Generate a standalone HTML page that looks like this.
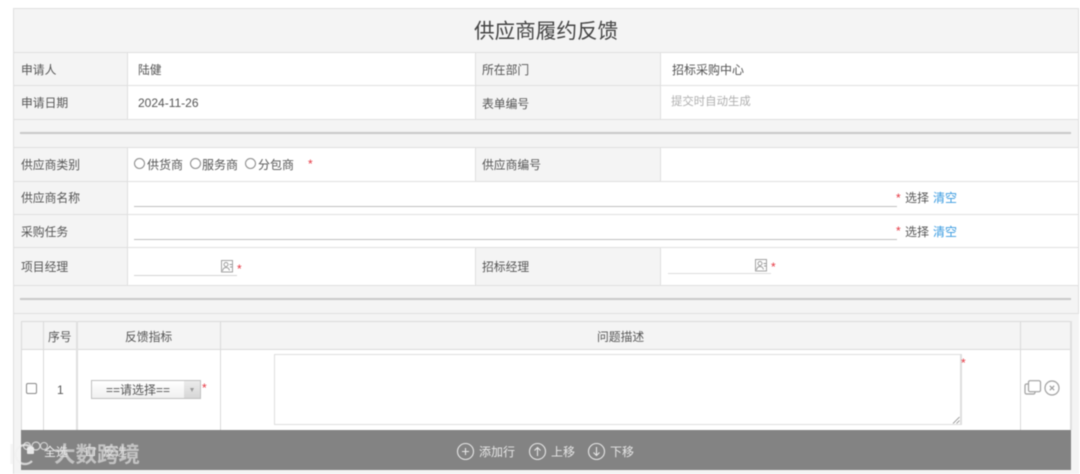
<!DOCTYPE html>
<html lang="zh"><head><meta charset="utf-8"><style>
html,body{margin:0;padding:0;width:1080px;height:474px;overflow:hidden;background:#fff}
body{font-family:"Liberation Sans","Noto Sans CJK SC",sans-serif;color:#555;font-size:12px;position:relative}
#p{position:absolute;left:0;top:0;width:1080px;height:474px;filter:blur(.4px)}
.b,.t{position:absolute}
.t{white-space:nowrap;line-height:16px}
.h{background:#e0e0e0;height:1px}
.v{background:#e0e0e0;width:1px}
.g{background:#f4f4f4}
.r{color:#e5343f}
.o{position:absolute;width:9px;height:9px;border:1px solid #888;border-radius:50%;background:#fff}
</style></head><body><div id="p">
<div class="b g" style="left:13px;top:8px;width:1066px;height:466px"></div>
<div class="b" style="left:13px;top:8px;width:1px;height:466px;background:#e0e0e0"></div>
<div class="b" style="left:13px;top:8px;width:1066px;height:1px;background:#e0e0e0"></div>
<div class="b" style="left:1078px;top:8px;width:1px;height:306px;background:#e0e0e0"></div>
<div class="b" style="left:1079px;top:0;width:1px;height:474px;background:#fff"></div>

<!-- white cells -->
<div class="b" style="left:127px;top:53px;width:348px;height:66px;background:#fff"></div>
<div class="b" style="left:661px;top:53px;width:417px;height:66px;background:#fff"></div>
<div class="b" style="left:127px;top:148px;width:348px;height:33px;background:#fff"></div>
<div class="b" style="left:661px;top:148px;width:417px;height:33px;background:#fff"></div>
<div class="b" style="left:127px;top:181px;width:951px;height:66px;background:#fff"></div>
<div class="b" style="left:127px;top:248px;width:348px;height:37px;background:#fff"></div>
<div class="b" style="left:661px;top:248px;width:417px;height:37px;background:#fff"></div>

<!-- row lines -->
<div class="b h" style="left:14px;top:52px;width:1064px"></div>
<div class="b h" style="left:14px;top:85px;width:1064px"></div>
<div class="b h" style="left:14px;top:119px;width:1064px"></div>
<div class="b h" style="left:14px;top:147px;width:1064px"></div>
<div class="b h" style="left:14px;top:181px;width:1064px"></div>
<div class="b h" style="left:14px;top:214px;width:1064px"></div>
<div class="b h" style="left:14px;top:247px;width:1064px"></div>
<div class="b h" style="left:14px;top:285px;width:1064px"></div>
<div class="b h" style="left:14px;top:313px;width:1064px"></div>

<!-- col lines -->
<div class="b v" style="left:127px;top:53px;height:66px"></div>
<div class="b v" style="left:475px;top:53px;height:66px"></div>
<div class="b v" style="left:660px;top:53px;height:66px"></div>
<div class="b v" style="left:127px;top:148px;height:137px"></div>
<div class="b v" style="left:475px;top:148px;height:33px"></div>
<div class="b v" style="left:660px;top:148px;height:33px"></div>
<div class="b v" style="left:475px;top:248px;height:37px"></div>
<div class="b v" style="left:660px;top:248px;height:37px"></div>

<!-- dividers -->
<div class="b" style="left:20px;top:132px;width:1051px;height:2px;background:#c8c8c8"></div>
<div class="b" style="left:20px;top:298px;width:1051px;height:2px;background:#c8c8c8"></div>

<!-- title -->
<div class="t" style="left:474px;top:20px;font-size:20.600px;line-height:24px;color:#444">供应商履约反馈</div>

<!-- labels -->
<div class="t" style="left:21px;top:62px;font-size:11.800px">申请人</div>
<div class="t" style="left:138px;top:62px;font-size:11.800px">陆健</div>
<div class="t" style="left:482px;top:62px;font-size:11.800px">所在部门</div>
<div class="t" style="left:672px;top:62px">招标采购中心</div>
<div class="t" style="left:21px;top:95px;font-size:11.800px">申请日期</div>
<div class="t" style="left:138px;top:95px">2024-11-26</div>
<div class="t" style="left:482px;top:96px;font-size:11.800px">表单编号</div>
<div class="t" style="left:671px;top:94px;color:#b0b0b0;font-size:11.400px">提交时自动生成</div>

<div class="t" style="left:21px;top:157px;font-size:11.800px">供应商类别</div>
<span class="o" style="left:134px;top:158px"></span><div class="t" style="left:147px;top:157px">供货商</div>
<span class="o" style="left:190px;top:158px"></span><div class="t" style="left:202px;top:157px">服务商</div>
<span class="o" style="left:245px;top:158px"></span><div class="t" style="left:258px;top:157px">分包商</div>
<div class="t r" style="left:308px;top:156px">*</div>
<div class="t" style="left:482px;top:157px;font-size:11.800px">供应商编号</div>

<div class="t" style="left:21px;top:190px;font-size:11.800px">供应商名称</div>
<div class="b" style="left:134px;top:206px;width:763px;height:1px;background:#c0c0c0"></div>
<div class="t r" style="left:896px;top:190px">*</div>
<div class="t" style="left:905px;top:190px">选择</div>
<div class="t" style="left:933px;top:190px;color:#3a9be0">清空</div>

<div class="t" style="left:21px;top:224px;font-size:11.800px">采购任务</div>
<div class="b" style="left:134px;top:239px;width:763px;height:1px;background:#c0c0c0"></div>
<div class="t r" style="left:896px;top:223px">*</div>
<div class="t" style="left:905px;top:224px">选择</div>
<div class="t" style="left:933px;top:224px;color:#3a9be0">清空</div>

<div class="t" style="left:21px;top:259px;font-size:11.800px">项目经理</div>
<div class="b" style="left:134px;top:275px;width:103px;height:1px;background:#d4d4d4"></div>
<svg class="b" style="left:221px;top:260px" width="12" height="13" viewBox="0 0 12 13" fill="none" stroke="#999" stroke-width=".9"><rect x=".5" y=".5" width="11" height="11.500"/><circle cx="5" cy="4.500" r="2"/><path d="M1.500 11c.5-3 2-3.500 3.500-3.500s3 1 3.500 3M8.500 4.500h2.500M9 7h2"/></svg>
<div class="t r" style="left:237px;top:261px">*</div>

<div class="t" style="left:482px;top:259px;font-size:11.800px">招标经理</div>
<div class="b" style="left:668px;top:273px;width:103px;height:1px;background:#dcdcdc"></div>
<svg class="b" style="left:755px;top:259px" width="12" height="13" viewBox="0 0 12 13" fill="none" stroke="#999" stroke-width=".9"><rect x=".5" y=".5" width="11" height="11.500"/><circle cx="5" cy="4.500" r="2"/><path d="M1.500 11c.5-3 2-3.500 3.500-3.500s3 1 3.500 3M8.500 4.500h2.500M9 7h2"/></svg>
<div class="t r" style="left:771px;top:259px">*</div>

<!-- inner table -->
<div class="b" style="left:21px;top:321px;width:1050px;height:1px;background:#dadada"></div>
<div class="b" style="left:21px;top:349px;width:1050px;height:1px;background:#dadada"></div>
<div class="b" style="left:22px;top:350px;width:1048px;height:80px;background:#fff"></div>
<div class="b" style="left:21px;top:321px;width:1px;height:109px;background:#dadada"></div>
<div class="b" style="left:43px;top:321px;width:1px;height:109px;background:#dadada"></div>
<div class="b" style="left:76px;top:321px;width:2px;height:109px;background:#e0e0e0"></div>
<div class="b" style="left:220px;top:321px;width:1px;height:109px;background:#dadada"></div>
<div class="b" style="left:1020px;top:321px;width:1px;height:109px;background:#dadada"></div>
<div class="b" style="left:1070px;top:321px;width:2px;height:109px;background:#e0e0e0"></div>

<div class="t" style="left:48px;top:329px;font-size:11.800px">序号</div>
<div class="t" style="left:125px;top:329px;font-size:11.800px">反馈指标</div>
<div class="t" style="left:597px;top:329px;font-size:11.800px">问题描述</div>

<div class="b" style="left:26px;top:383px;width:9px;height:9px;border:1px solid #888;border-radius:2px;background:#fff"></div>
<div class="t" style="left:57px;top:382px;font-size:12px">1</div>

<!-- select -->
<div class="b" style="left:91px;top:380px;width:108px;height:17px;border:1px solid #c0c0c0;background:linear-gradient(#fff,#f0f0f0)"></div>
<div class="b" style="left:184px;top:381px;width:16px;height:17px;background:linear-gradient(#ececec,#d6d6d6)"></div>
<div class="b" style="left:190px;top:388px;width:0;height:0;border-left:2.500px solid transparent;border-right:2.500px solid transparent;border-top:4px solid #999"></div>
<div class="t" style="left:106px;top:382px">==请选择==</div>
<div class="t r" style="left:202px;top:380px">*</div>

<!-- textarea -->
<div class="b" style="left:274px;top:354px;width:685px;height:69px;border:1px solid #dedede;border-right-width:2px;background:#fff"></div>
<svg class="b" style="left:952px;top:416px" width="8" height="8" viewBox="0 0 8 8" stroke="#888" stroke-width=".8"><path d="M1 7.500L7.500 1M4.500 7.500L7.500 4.500"/></svg>
<div class="t r" style="left:961px;top:355px">*</div>

<!-- row icons -->
<svg class="b" style="left:1024px;top:380px" width="18" height="16" viewBox="0 0 18 16" fill="none" stroke="#a0a0a0" stroke-width="1.200"><rect x="4.500" y=".7" width="12" height="11" rx="1.500"/><path d="M4.500 4H2.500A1.500 1.500 0 0 0 1 5.500v7A1.500 1.500 0 0 0 2.500 14h7a1.500 1.500 0 0 0 1.500-1.500V11.700"/></svg>
<svg class="b" style="left:1044px;top:380px" width="16" height="16" viewBox="0 0 16 16" fill="none" stroke="#a0a0a0" stroke-width="1.200"><circle cx="8" cy="8" r="7"/><path d="M5.800 5.800l4.400 4.400M10.200 5.800l-4.400 4.400"/></svg>

<!-- bar -->
<div class="b" style="left:21px;top:430px;width:1050px;height:40px;background:#838383"></div>
<div class="b" style="left:27px;top:447px;width:7px;height:7px;background:#e8e8e8;border-radius:1px"></div>
<div class="t" style="left:44px;top:444px;color:#eee">全选</div>
<div class="b" style="left:86px;top:447px;width:7px;height:7px;border:1px solid #ddd"></div>
<div class="t" style="left:103px;top:444px;color:#ddd">反选</div>

<svg class="b" style="left:456px;top:442px" width="19" height="19" viewBox="0 0 19 19" fill="none" stroke="#e6e6e6" stroke-width="1.100"><circle cx="9.500" cy="9.500" r="8"/><path d="M9.500 6v7M6 9.500h7"/></svg>
<div class="t" style="left:479px;top:444px;color:#e6e6e6">添加行</div>
<svg class="b" style="left:528px;top:442px" width="19" height="19" viewBox="0 0 19 19" fill="none" stroke="#e6e6e6" stroke-width="1.100"><circle cx="9.500" cy="9.500" r="8"/><path d="M9.500 14V5.500M6.500 8.500l3-3 3 3"/></svg>
<div class="t" style="left:551px;top:444px;color:#e6e6e6">上移</div>
<svg class="b" style="left:587px;top:442px" width="19" height="19" viewBox="0 0 19 19" fill="none" stroke="#e6e6e6" stroke-width="1.100"><circle cx="9.500" cy="9.500" r="8"/><path d="M9.500 5v8.500M6.500 10.500l3 3 3-3"/></svg>
<div class="t" style="left:610px;top:444px;color:#e6e6e6">下移</div>

<!-- watermark -->
<div class="t" style="left:54px;top:443px;font-size:21.500px;line-height:24px;font-weight:bold;color:rgba(225,225,225,.68)">大数跨境</div>
<svg class="b" style="left:8px;top:439px" width="44" height="30" viewBox="0 0 44 30" fill="none" stroke="rgba(240,240,240,.75)" stroke-width="2.200"><path d="M3.500 5v20"/><path d="M24 9a9.500 9.500 0 1 0 0 13"/><circle cx="19" cy="7" r="3.500" stroke-width="1.200"/><circle cx="28" cy="7" r="4" stroke-width="1.200"/><circle cx="36" cy="7" r="3.500" stroke-width="1"/></svg>
</div></body></html>
